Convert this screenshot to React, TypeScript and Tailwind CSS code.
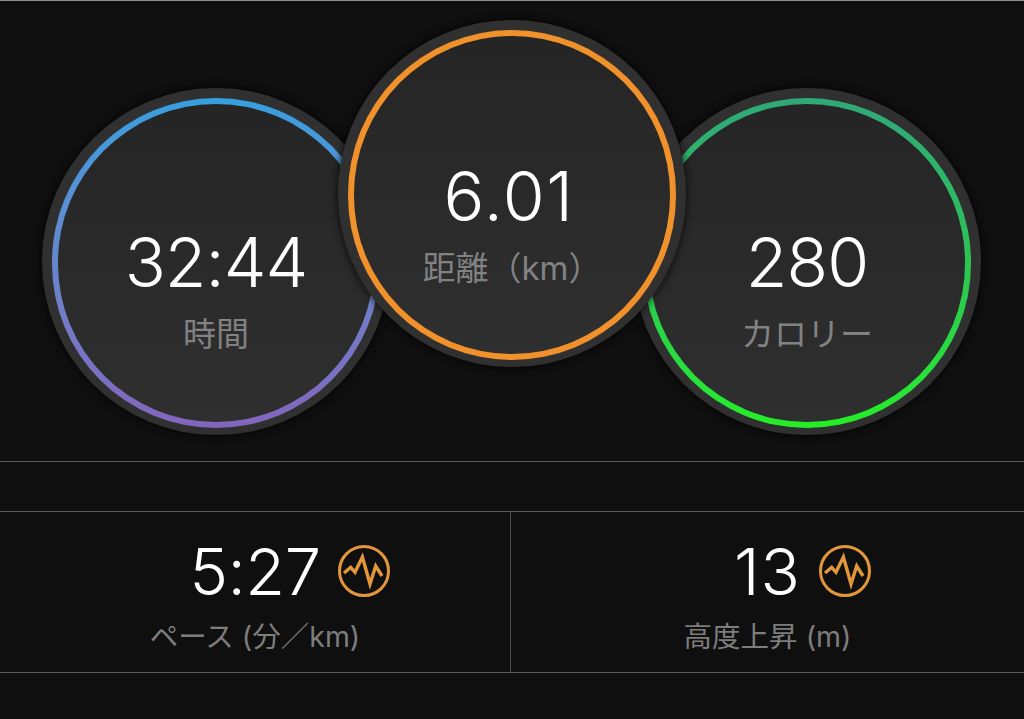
import React from "react";

const jp = { fontFamily: '"Inter","Noto Sans CJK JP",sans-serif' };

function Pulse({ offset }: { offset: string }) {
  return (
    <svg width="56" height="56" viewBox="0 0 56 56" fill="none" className={`absolute left-full top-[11px] ${offset}`}>
      <circle cx="28" cy="28" r="24.5" stroke="#e2973a" strokeWidth="3" />
      <polyline points="8,30 14.7,24.3 19,29.3 26.4,14 34,41 39.7,23 46,33" stroke="#e2973a" strokeWidth="3.4" strokeLinejoin="miter" />
    </svg>
  );
}

function Disc({ ring, value, label, className, valueClass }: { ring: string; value: string; label: string; className: string; valueClass: string }) {
  return (
    <div className={`w-[348px] h-[347px] shrink-0 rounded-full bg-[#303031] pt-[10px] pb-[7px] px-[10px] shadow-[0_0_6px_2px_rgba(0,0,0,0.55)] ${className}`}>
      <div className={`w-full h-full rounded-full p-[6px] ${ring}`}>
        <div className="w-full h-full rounded-full bg-linear-to-b from-[#252526] to-[#2f2f30] flex flex-col items-center">
          <div className={`text-[68px] leading-[80px] font-light text-white ${valueClass}`}>{value}</div>
          <div className="mt-[10px] text-[33px] leading-[44px] text-[#828282] whitespace-nowrap">{label}</div>
        </div>
      </div>
    </div>
  );
}

function Stat({ value, label, border, valueClass, offset }: { value: string; label: string; border?: boolean; valueClass: string; offset: string }) {
  return (
    <div className={`flex flex-col items-center ${border ? "border-r border-[#4d4d4d]" : ""}`}>
      <div className={`relative mt-[20px] text-[65px] leading-[80px] font-light text-white ${valueClass}`}>
        {value}
        <Pulse offset={offset} />
      </div>
      <div className="mt-[3px] text-[28.5px] leading-[44px] text-[#7d7d7d] whitespace-nowrap">{label}</div>
    </div>
  );
}

export default function App() {
  return (
    <div className="w-full h-[719px] overflow-hidden bg-[#0f0f10] border-t border-[#8f8f8f]" style={jp}>
      <div className="h-[461px] border-b border-[#5a5a5a] flex pl-[42px]">
        <Disc className="mt-[87px]" valueClass="mt-[118px] tracking-[-1px]" ring="bg-linear-to-b from-[#359fdf] via-[#6487cb] to-[#8265bd]" value="32:44" label="時間" />
        <Disc className="mt-[19px] -ml-[52px] z-10" valueClass="mt-[120px] mr-[6px] tracking-[1.5px]" ring="bg-[#f0912b]" value="6.01" label="距離（km）" />
        <Disc className="mt-[87px] -ml-[53px]" valueClass="mt-[118px] tracking-[-1px]" ring="bg-linear-to-b from-[#30a878] via-[#2bc451] to-[#25ee25]" value="280" label="カロリー" />
      </div>
      <div className="mt-[49px] h-[162px] grid grid-cols-[511px_1fr] border-y border-[#5a5a5a]">
        <Stat value="5:27" valueClass="tracking-[-0.5px]" offset="ml-[15px]" label="ペース (分／km)" border />
        <Stat value="13" valueClass="tracking-[1px]" offset="ml-[16px]" label="高度上昇 (m)" />
      </div>
    </div>
  );
}
